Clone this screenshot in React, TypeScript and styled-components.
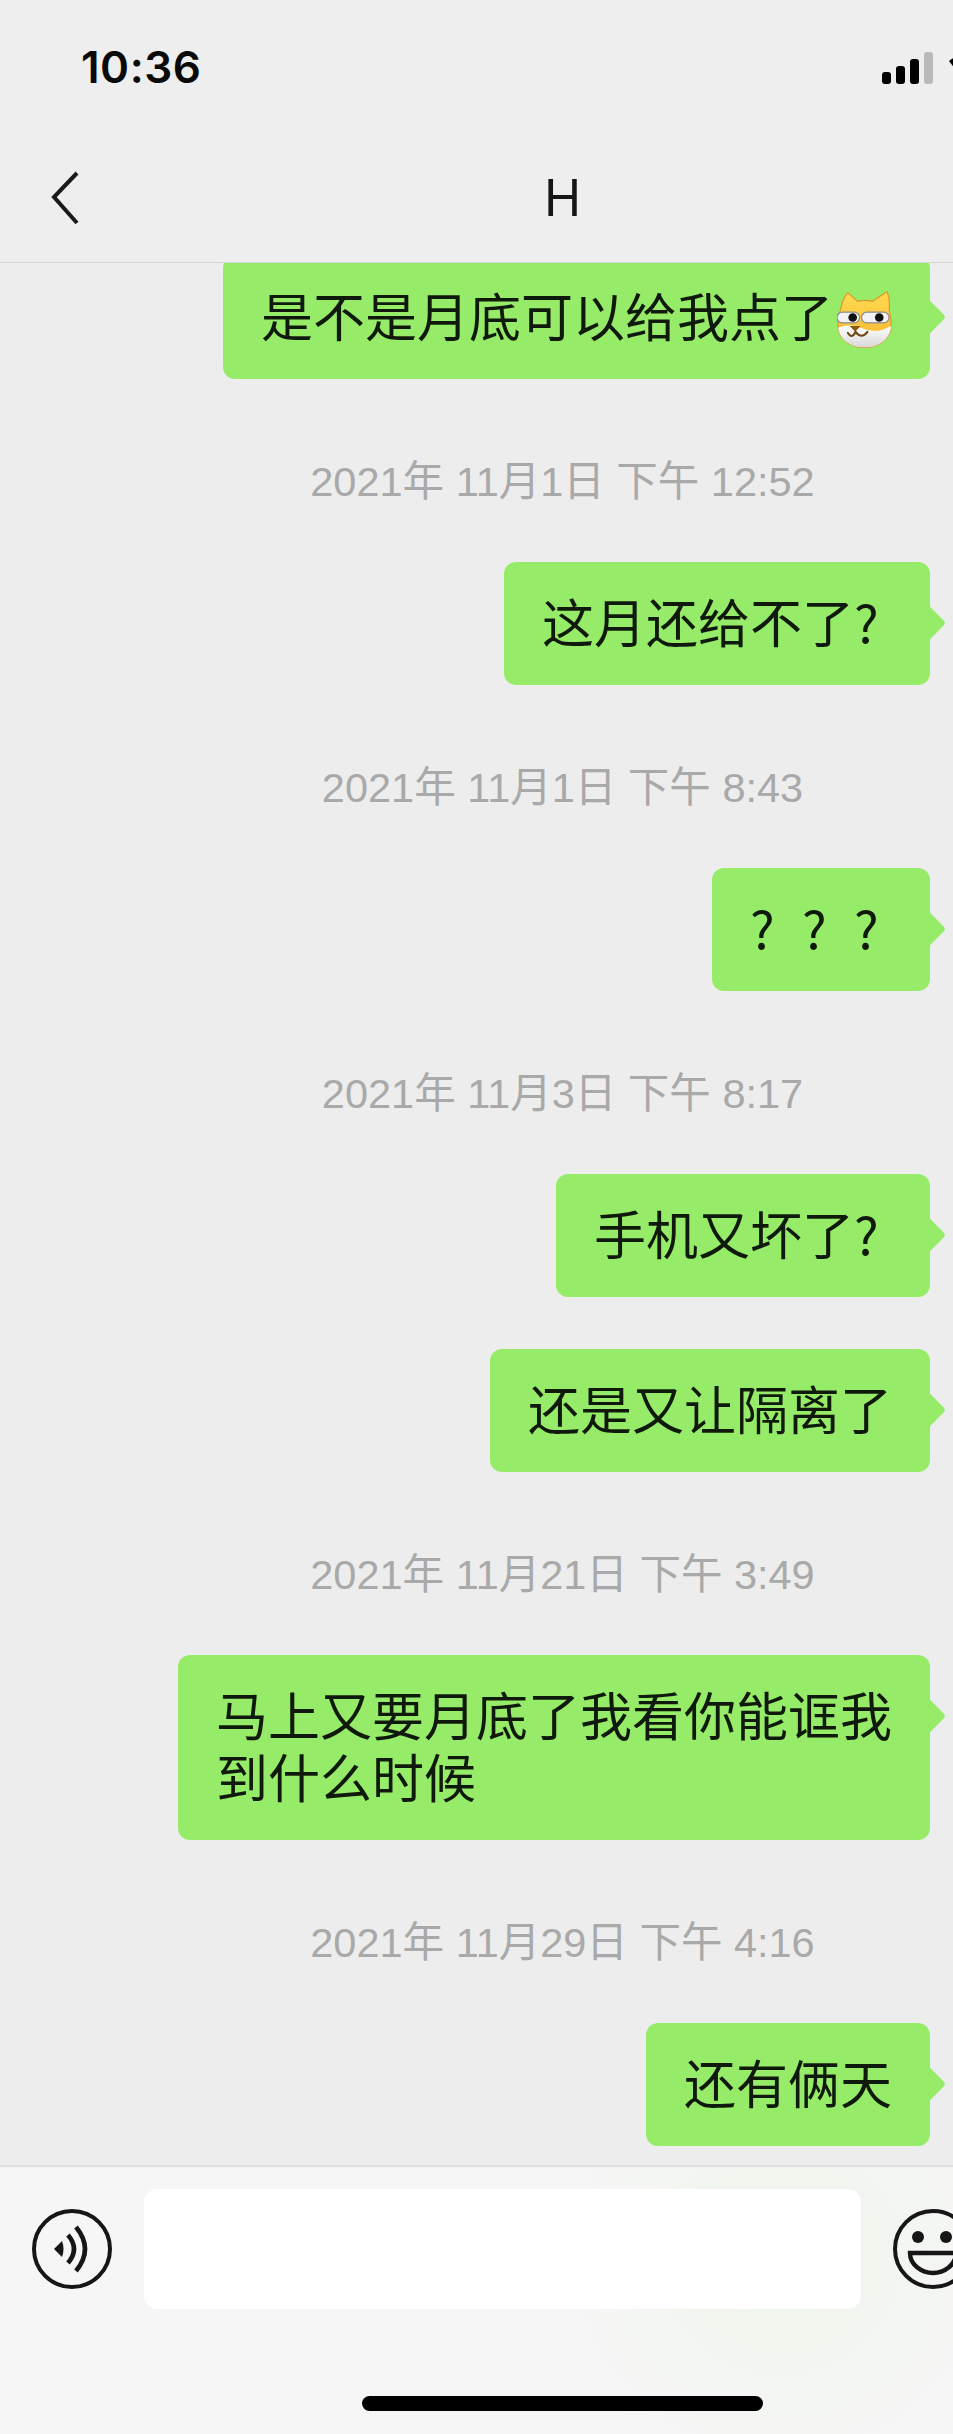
import React from 'react';
import styled, { createGlobalStyle } from 'styled-components';

const GlobalStyle = createGlobalStyle`
  html, body {
    margin: 0;
    padding: 0;
    background: #ededed;
  }
  * {
    box-sizing: border-box;
  }
`;

const CJK = `"Noto Sans CJK SC", "Liberation Sans", sans-serif`;
const LATIN_CJK = `"Liberation Sans", "Noto Sans CJK SC", sans-serif`;

// the screenshot is a crop of a wider phone screen, so the viewport clips the right side
const Viewport = styled.div`
  width: 953px;
  height: 2434px;
  overflow: hidden;
`;

const Screen = styled.div`
  width: 1125px;
  height: 2434px;
  display: flex;
  flex-direction: column;
  background: #ededed;
  font-family: ${CJK};
`;

const Header = styled.header`
  flex: 0 0 263px;
  display: flex;
  flex-direction: column;
  border-bottom: 1px solid #d6d6d6;
  background: #eeeeee;
`;

const StatusBar = styled.div`
  height: 134px;
  padding: 40px 0 0 81px;
  display: flex;
  gap: 681px;
`;

const Clock = styled.div`
  font-family: "Inter", ${LATIN_CJK};
  font-size: 44px;
  font-weight: 600;
  line-height: 54px;
  letter-spacing: 0.5px;
  color: #0a0a0a;
`;

const StatusIcons = styled.svg`
  width: 90px;
  height: 40px;
  margin-top: 12px;
`;

const NavBar = styled.div`
  flex: 1;
  display: grid;
  grid-template-columns: 1fr auto 1fr;
  align-items: center;
`;

const BackIcon = styled.svg`
  width: 30px;
  height: 54px;
  margin-left: 50px;
`;

const Title = styled.div`
  font-family: "Inter", ${LATIN_CJK};
  font-size: 50px;
  font-weight: 400;
  line-height: 60px;
  color: #161616;
`;

const MessageList = styled.main`
  flex: 1;
  min-height: 0;
  overflow: hidden;
  display: flex;
  flex-direction: column;
  justify-content: flex-end;
  align-items: flex-end;
  padding: 0 195px 19px 0;
`;

const Timestamp = styled.div`
  flex: none;
  align-self: center;
  margin-right: -195px;
  height: 183px;
  padding-top: 75px;
  font-family: ${LATIN_CJK};
  font-size: 41.5px;
  line-height: 56px;
  color: #a9a9a9;
  white-space: pre;
`;

const Bubble = styled.div<{ $stacked?: boolean }>`
  flex: none;
  position: relative;
  max-width: 760px;
  margin-top: ${p => (p.$stacked ? '52px' : '0')};
  padding: 28px 38px 33px;
  border-radius: 12px;
  background: #96ec68;
  font-size: 52px;
  line-height: 62px;
  color: #101a0c;

  &::after {
    content: '';
    position: absolute;
    top: 46px;
    right: -10px;
    width: 30px;
    height: 30px;
    border-radius: 4px;
    background: #96ec68;
    transform: rotate(45deg);
  }
`;

const QMark = styled.span`
  display: inline-block;
  width: 38px;

  & + & {
    margin-left: 14px;
  }
`;

const EmojiSvg = styled.svg`
  display: inline-block;
  width: 55px;
  height: 58px;
  margin: -10px 0 -10px 4px;
  vertical-align: -2px;
`;

const Composer = styled.footer`
  flex: 0 0 269px;
  display: flex;
  flex-direction: column;
  align-items: center;
  border-top: 2px solid #dfdfdf;
  background:
    radial-gradient(ellipse 230px 220px at 780px 90px, #eef5ea 0%, rgba(238, 245, 234, 0) 100%),
    #f6f6f6;
`;

const InputRow = styled.div`
  width: 100%;
  display: flex;
  align-items: center;
  gap: 32px;
  padding: 22px 0 0 32px;
`;

const RoundIcon = styled.svg`
  flex: none;
  width: 80px;
  height: 80px;
`;

const TextBox = styled.div`
  flex: none;
  width: 717px;
  height: 120px;
  border-radius: 14px;
  background: #ffffff;
`;

const HomeBar = styled.div`
  width: 401px;
  height: 15px;
  margin-top: 87px;
  border-radius: 8px;
  background: #000000;
`;

const FACE = 'M4 17 C5 11 8 5 11 1 L21 10 Q28 8 36 10 L51 0 C53 5 54 12 53 19 Q55 25 55 34 C55 48 43 57 28 57 C13 57 1 48 1 34 Q1 25 4 17 Z';

const DogEmoji = () => (
  <EmojiSvg viewBox="0 0 56 58">
    <defs>
      <linearGradient id="fur" x1="0" y1="0" x2="0" y2="1">
        <stop offset="0" stopColor="#ffdc52" />
        <stop offset="1" stopColor="#f7b52e" />
      </linearGradient>
      <linearGradient id="belly" x1="0" y1="0" x2="0" y2="1">
        <stop offset="0" stopColor="#ffffff" />
        <stop offset="1" stopColor="#d6d6d6" />
      </linearGradient>
      <clipPath id="face">
        <path d={FACE} />
      </clipPath>
    </defs>
    <path d={FACE} fill="url(#fur)" stroke="#e0952a" strokeWidth="1.2" />
    <path d="M1 37 Q14 32 24 37 Q40 44 55 35 L55 58 L1 58 Z" fill="url(#belly)" clipPath="url(#face)" />
    <rect x="0" y="21" width="23" height="11" rx="5.5" fill="#f2f2f2" stroke="#8b8b8b" strokeWidth="1.2" />
    <rect x="25" y="21" width="28" height="11" rx="5.5" fill="#f2f2f2" stroke="#8b8b8b" strokeWidth="1.2" />
    <circle cx="16" cy="26.5" r="4.4" fill="#111" />
    <circle cx="43" cy="26.5" r="4.4" fill="#111" />
    <path d="M13 35 L24 35 L18.5 41 Z" fill="#8a5a12" />
    <path d="M11 42 Q15 49 19 41 Q25 49 31 41" fill="none" stroke="#6e4510" strokeWidth="2" strokeLinecap="round" />
  </EmojiSvg>
);

const VoiceIcon = () => (
  <RoundIcon viewBox="0 0 80 80" fill="none" stroke="#161616">
    <circle cx="40" cy="40" r="38" strokeWidth="4" />
    <path d="M22 40 L30 32 Q33 40 30 48 Z" fill="#161616" stroke="none" />
    <path d="M36 26 Q48 40 36 54" strokeWidth="4.6" />
    <path d="M44 18 Q62 40 44 62" strokeWidth="4.6" />
  </RoundIcon>
);

const SmileIcon = () => (
  <RoundIcon viewBox="0 0 80 80" fill="none" stroke="#161616">
    <circle cx="40" cy="40" r="38" strokeWidth="4" />
    <circle cx="25" cy="28" r="6" fill="#161616" stroke="none" />
    <circle cx="53" cy="28" r="6" fill="#161616" stroke="none" />
    <path d="M17 44 H63 C63 56 51 64 40 64 C29 64 17 56 17 44 Z" strokeWidth="4.4" />
  </RoundIcon>
);

const App: React.FC = () => {
  return (
    <Viewport>
      <GlobalStyle />
      <Screen>
        <Header>
          <StatusBar>
            <Clock>10:36</Clock>
            <StatusIcons viewBox="0 0 90 40">
              <rect x="0" y="20" width="9" height="12" rx="3" fill="#000" />
              <rect x="14" y="14" width="9" height="18" rx="3" fill="#000" />
              <rect x="28" y="7" width="9" height="25" rx="3" fill="#000" />
              <rect x="42" y="0" width="9" height="32" rx="3" fill="#b9b9b9" />
              <path d="M67 9 Q76 1 90 6 L80 26 Z" fill="#000" />
            </StatusIcons>
          </StatusBar>
          <NavBar>
            <BackIcon viewBox="0 0 30 54" fill="none" stroke="#1a1a1a" strokeWidth="4">
              <path d="M27 2 L4 26 L27 52" />
            </BackIcon>
            <Title>H</Title>
          </NavBar>
        </Header>
        <MessageList>
          <Bubble>
            是不是月底可以给我点了
            <DogEmoji />
          </Bubble>
          <Timestamp>2021年 11月1日 下午 12:52</Timestamp>
          <Bubble>
            这月还给不了<QMark>?</QMark>
          </Bubble>
          <Timestamp>2021年 11月1日 下午 8:43</Timestamp>
          <Bubble>
            <QMark>?</QMark>
            <QMark>?</QMark>
            <QMark>?</QMark>
          </Bubble>
          <Timestamp>2021年 11月3日 下午 8:17</Timestamp>
          <Bubble>
            手机又坏了<QMark>?</QMark>
          </Bubble>
          <Bubble $stacked>还是又让隔离了</Bubble>
          <Timestamp>2021年 11月21日 下午 3:49</Timestamp>
          <Bubble>
            马上又要月底了我看你能诓我
            <br />
            到什么时候
          </Bubble>
          <Timestamp>2021年 11月29日 下午 4:16</Timestamp>
          <Bubble>还有俩天</Bubble>
        </MessageList>
        <Composer>
          <InputRow>
            <VoiceIcon />
            <TextBox />
            <SmileIcon />
          </InputRow>
          <HomeBar />
        </Composer>
      </Screen>
    </Viewport>
  );
};

export default App;
